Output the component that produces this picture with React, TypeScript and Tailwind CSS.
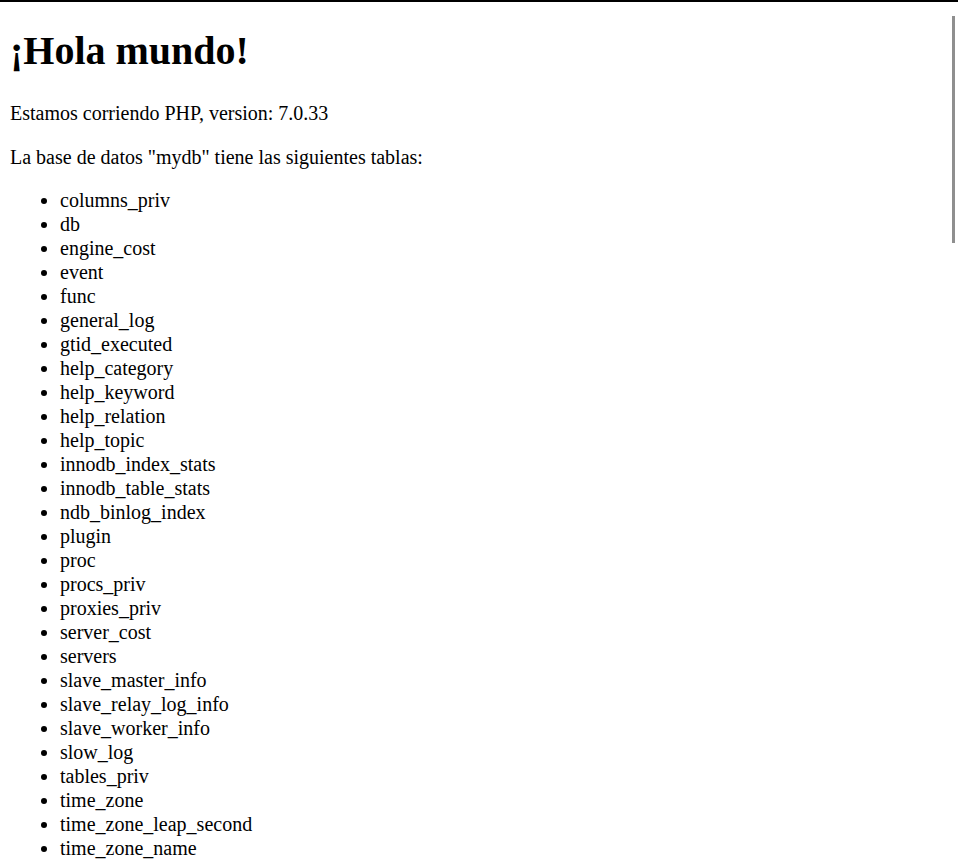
const tables = [
  "columns_priv",
  "db",
  "engine_cost",
  "event",
  "func",
  "general_log",
  "gtid_executed",
  "help_category",
  "help_keyword",
  "help_relation",
  "help_topic",
  "innodb_index_stats",
  "innodb_table_stats",
  "ndb_binlog_index",
  "plugin",
  "proc",
  "procs_priv",
  "proxies_priv",
  "server_cost",
  "servers",
  "slave_master_info",
  "slave_relay_log_info",
  "slave_worker_info",
  "slow_log",
  "tables_priv",
  "time_zone",
  "time_zone_leap_second",
  "time_zone_name",
  "time_zone_transition",
  "time_zone_transition_type",
  "user",
];

export default function App() {
  return (
    <div className="relative h-[861px] w-[958px] overflow-hidden bg-white text-black font-['Liberation_Serif','Times_New_Roman',serif]">
      {/* top edge */}
      <div className="h-[2px] bg-black" />

      <div className="px-[10px]">
        <h1 className="mt-[26px] mb-[27px] text-[40px] leading-[46px] font-bold">¡Hola mundo!</h1>
        <p className="text-[20px] leading-[24px]">Estamos corriendo PHP, version: 7.0.33</p>
        <p className="mt-[20px] text-[20px] leading-[24px]">La base de datos "mydb" tiene las siguientes tablas:</p>
        <ul className="mt-[19px] list-disc pl-[50px] text-[20px] leading-[24px]">
          {tables.map((t) => (
            <li key={t}>{t}</li>
          ))}
        </ul>
      </div>

      {/* scrollbar thumb */}
      <div className="absolute left-[952px] top-[16px] h-[227px] w-[3px] bg-[#8f8f8f]" />
    </div>
  );
}
